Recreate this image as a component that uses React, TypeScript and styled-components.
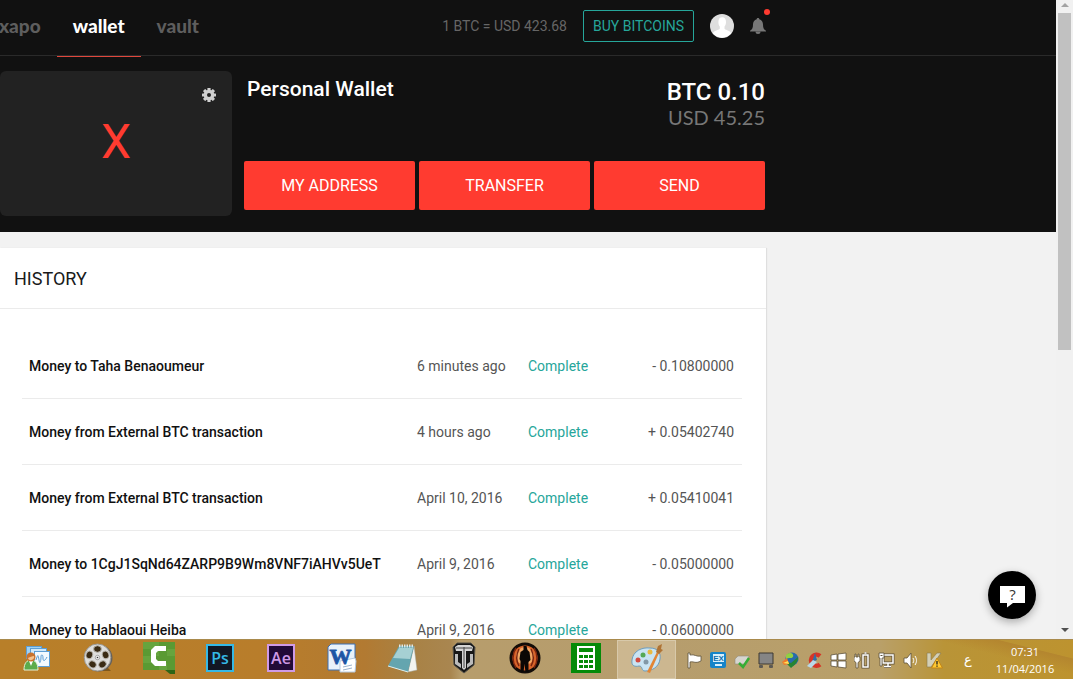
import React from 'react';
import styled, { createGlobalStyle } from 'styled-components';

const GlobalStyle = createGlobalStyle`
  * { box-sizing: border-box; }
  body { margin: 0; font-family: Roboto, 'Liberation Sans', sans-serif; background: #f2f2f2; }
  button { font-family: inherit; cursor: pointer; }
`;

const Desktop = styled.div`
  display: flex;
  flex-direction: column;
  height: 100vh;
  overflow: hidden;
`;

const Browser = styled.div`
  position: relative;
  display: flex;
  flex: 1;
  min-height: 0;
`;

const Page = styled.div`
  flex: 1;
  min-width: 0;
  overflow: hidden;
  background: #f2f2f2;
`;

const Dark = styled.div`
  background: #111;
`;

const TopBar = styled.header`
  border-bottom: 1px solid #2a2a2a;
`;

const TopBarInner = styled.div`
  display: flex;
  align-items: center;
  justify-content: space-between;
  width: 100%;
  max-width: 766px;
  height: 55px;
  padding-bottom: 3px;
`;

const Nav = styled.nav`
  display: flex;
  height: 57px;
  align-self: flex-start;
  margin-left: -17px;
`;

const NavLink = styled.a<{ $active?: boolean }>`
  padding: 14px 16px 0;
  font: 900 19px/24px Lato, sans-serif;
  color: ${(p) => (p.$active ? '#fff' : '#5e5e5e')};
  border-bottom: 1px solid ${(p) => (p.$active ? '#e0473c' : 'transparent')};
  text-decoration: none;
`;

const Account = styled.div`
  display: flex;
  align-items: center;
  gap: 16px;
`;

const Rate = styled.span`
  font-size: 14px;
  line-height: 20px;
  color: #666;
`;

const BuyButton = styled.button`
  width: 111px;
  height: 32px;
  padding: 0;
  border: 1px solid #26a69a;
  border-radius: 2px;
  background: transparent;
  color: #26a69a;
  font-size: 14px;
`;

const IconButton = styled.button`
  display: flex;
  padding: 0;
  border: 0;
  background: none;
`;

const BellButton = styled(IconButton)`
  position: relative;
`;

const Badge = styled.span`
  position: absolute;
  top: -9px;
  right: -4px;
  width: 6px;
  height: 6px;
  border-radius: 50%;
  background: #ff3b30;
`;

const Hero = styled.section`
  display: flex;
  gap: 12px;
  width: 100%;
  max-width: 765px;
  padding: 15px 0 16px;
`;

const WalletCard = styled.div`
  position: relative;
  display: flex;
  align-items: center;
  justify-content: center;
  width: 232px;
  height: 145px;
  padding-bottom: 4px;
  border-radius: 6px;
  background: #222;
`;

const WalletMark = styled.span`
  font-size: 48px;
  line-height: 56px;
  color: #ff3b30;
`;

const GearButton = styled(IconButton)`
  position: absolute;
  top: 17px;
  right: 16px;
`;

const Summary = styled.div`
  display: flex;
  flex: 1;
  flex-direction: column;
  justify-content: space-between;
  padding-bottom: 6px;
`;

const SummaryTop = styled.div`
  display: flex;
  justify-content: space-between;
  padding: 4px 0 0 3px;
`;

const WalletName = styled.h1`
  margin: 0;
  font-size: 21px;
  line-height: 28px;
  font-weight: 500;
  color: #fff;
`;

const Balance = styled.div`
  padding-top: 4px;
  text-align: right;
`;

const BalanceBtc = styled.div`
  font-size: 24px;
  line-height: 26px;
  font-weight: 500;
  color: #fff;
`;

const BalanceUsd = styled.div`
  font: 400 20px/24px Lato, sans-serif;
  color: #777;
`;

const Actions = styled.div`
  display: grid;
  grid-template-columns: repeat(3, 1fr);
  gap: 4px;
`;

const ActionButton = styled.button`
  height: 49px;
  border: 0;
  border-radius: 2px;
  background: #ff3b30;
  color: #fff;
  font-size: 16px;
`;

const HistoryCard = styled.section`
  width: 100%;
  max-width: 766px;
  margin-top: 16px;
  background: #fff;
  box-shadow: 1px 0 1px rgba(0, 0, 0, 0.08);
`;

const HistoryTitle = styled.h2`
  margin: 0;
  padding: 19px 14px 17px;
  border-bottom: 1px solid #ebebeb;
  font-size: 18px;
  line-height: 24px;
  font-weight: 400;
  color: #1a1a1a;
`;

const HistoryBody = styled.div`
  padding: 24px 24px 24px 22px;
`;

const Table = styled.table`
  width: 100%;
  table-layout: fixed;
  border-collapse: separate;
  border-spacing: 0;
  font-size: 14px;
  line-height: 20px;
`;

const Cell = styled.td<{ $tone?: 'name' | 'status' | 'amount' }>`
  height: 66px;
  padding: 1px 8px 0 7px;
  border-bottom: 1px solid #ebebeb;
  white-space: nowrap;
  font-weight: ${(p) => (p.$tone === 'name' ? 500 : 400)};
  text-align: ${(p) => (p.$tone === 'amount' ? 'right' : 'left')};
  color: ${(p) => (p.$tone === 'name' ? '#111' : p.$tone === 'status' ? '#26a69a' : '#555')};
`;

const Col = styled.col<{ $width?: number }>`
  width: ${(p) => (p.$width ? `${p.$width}px` : 'auto')};
`;

const ChatButton = styled.button`
  position: absolute;
  right: 37px;
  bottom: 20px;
  display: flex;
  align-items: center;
  justify-content: center;
  width: 48px;
  height: 48px;
  padding: 3px 0 0;
  border: 0;
  border-radius: 50%;
  background: #000;
  box-shadow: 0 3px 8px rgba(0, 0, 0, 0.3);
`;

const ScrollTrack = styled.div`
  display: flex;
  flex-direction: column;
  align-items: center;
  width: 17px;
  padding: 3px 0 7px;
  background: #f1f1f1;
`;

const ScrollThumb = styled.div`
  width: 13px;
  height: 337px;
  margin: 6px 0 auto;
  background: #c1c1c1;
`;

const ScrollArrow = styled.div<{ $up?: boolean }>`
  border: solid transparent;
  border-width: ${(p) => (p.$up ? '0 4px 4px' : '4px 4px 0')};
  ${(p) => (p.$up ? 'border-bottom-color: #a3a3a3' : 'border-top-color: #505050')};
`;

const Taskbar = styled.footer`
  display: flex;
  justify-content: space-between;
  height: 40px;
  padding: 0 14px 0 6px;
  border-top: 1px solid #a98a4c;
  background:
    linear-gradient(14deg, transparent 60%, #b4862f 78%, transparent 79%) right / 190px 100% no-repeat,
    linear-gradient(90deg, #b87f29 0%, #b87d2b 25%, #b27a32 34%, #a88143 38%, #a98650 42%, #b79d6c 43%, #b69d6d 62%, #b9a069 82%, #b99437 88%, #bd932f 100%);
`;

const Apps = styled.div`
  display: flex;
`;

const AppButton = styled.button<{ $active?: boolean }>`
  display: flex;
  align-items: center;
  justify-content: center;
  width: 59px;
  height: 39px;
  margin: 0 1px;
  padding: 0 0 3px;
  border: 1px solid ${(p) => (p.$active ? '#d8c9aa' : 'transparent')};
  background: ${(p) => (p.$active ? 'rgba(255, 245, 225, 0.3)' : 'none')};
`;

const Tray = styled.div`
  display: flex;
  align-items: center;
`;

const TrayItem = styled.button`
  display: flex;
  align-items: center;
  justify-content: center;
  width: 24px;
  height: 40px;
  padding: 2px 0 0 2px;
  border: 0;
  background: none;
`;

const Language = styled.button`
  width: 46px;
  padding: 0;
  border: 0;
  background: none;
  color: #fff;
  font: 13px/20px 'DejaVu Sans', sans-serif;
`;

const Clock = styled.div`
  width: 68px;
  font: 11px/17px 'Open Sans', sans-serif;
  text-align: center;
  color: #fff;
  white-space: nowrap;
`;

const Svg = ({ w, h = w, children }: { w: number; h?: number; children: React.ReactNode }) => (
  <svg width={w} height={h} viewBox={`0 0 ${w} ${h}`} aria-hidden="true">
    {children}
  </svg>
);

const Avatar = () => (
  <Svg w={24}>
    <circle cx="12" cy="12" r="12" fill="#dedede" />
    <path d="M8.400 8C8.400 4.600 9.900 3.200 12.300 3.200S16 4.800 16 8c0 2-.7 3.500-1.500 4.500v2c0 1.500 5 1.500 6.800 4.800A12 12 0 0 1 2.700 19.300C4.500 16 9.800 16 9.800 14.500v-2C9 11.500 8.400 10 8.400 8z" fill="#fff" />
  </Svg>
);

const Bell = () => (
  <Svg w={16}>
    <path d="M8 0c.8 0 1.300.5 1.300 1.300C11.800 2 13 4 13 6.500c0 3.500.8 5 3 6.300v.7H0v-.7c2.200-1.300 3-2.800 3-6.300C3 4 4.200 2 6.700 1.300 6.700.5 7.200 0 8 0z" fill="#777" />
    <path d="M5.500 13.500h5a2.500 2.500 0 0 1-5 0z" fill="#777" />
  </Svg>
);

const Gear = () => (
  <Svg w={14}>
    <g fill="#d0d0d0">
      {[0, 45, 90, 135].map((a) => (
        <rect key={a} x="5.400" y="0" width="3.200" height="14" rx=".5" transform={`rotate(${a} 7 7)`} />
      ))}
      <circle cx="7" cy="7" r="5.300" />
    </g>
    <circle cx="7" cy="7" r="2" fill="#222" />
  </Svg>
);

const Chat = () => (
  <Svg w={25} h={22}>
    <path d="M0 0h25v17H13l-6 4.500V17H0z" fill="#fff" />
    <text x="12.500" y="14" textAnchor="middle" fontFamily="Open Sans, sans-serif" fontSize="15" fill="#333">
      ?
    </text>
  </Svg>
);

const Presenter = () => (
  <Svg w={28}>
    <g stroke="#5d9ed4">
      <rect x="3.500" y="2.500" width="15" height="12" fill="#9fd2f5" />
      <rect x="7.500" y="4.500" width="16" height="14" fill="#cfe8fa" />
      <rect x="11.500" y="7.500" width="15" height="15" fill="#f3faff" />
      <path d="M13 16c2-6 2-6 3 0s2 0 2-3 2-3 2 1 2 3 4-1" fill="none" />
    </g>
    <path d="M1 26c0-7 3-10 7-10s7 3 7 10z" fill="#5cac4c" stroke="#e2f3d8" />
    <path d="M6 17l2 5 2-5z" fill="#fff" />
    <circle cx="8" cy="13" r="4.500" fill="#c9722c" />
    <path d="M5 14c2-1 4-2 6-2 1 4-5 6-6 2z" fill="#f5c28d" />
  </Svg>
);

const Reel = () => (
  <Svg w={30}>
    <path d="M8 28h20l-4-4z" fill="#805719" />
    <ellipse cx="15.500" cy="15" rx="14" ry="13.500" fill="#65615c" />
    <ellipse cx="14.500" cy="14.500" rx="13.300" ry="13.500" fill="#dededc" stroke="#9b9892" />
    {[0, 72, 144, 216, 288].map((a) => (
      <ellipse key={a} cx="14.500" cy="6" rx="3.900" ry="3.300" fill="#3a2b14" stroke="#b9b6ae" transform={`rotate(${a} 14.500 14.500)`} />
    ))}
    <circle cx="14.500" cy="14.500" r="2.200" fill="#f5f5f5" stroke="#888" strokeWidth=".7" />
    <circle cx="14.500" cy="14.500" r=".8" fill="#333" />
  </Svg>
);

const Camtasia = () => (
  <Svg w={32}>
    <path d="M0 0h32v32h-5l-5-4H0z" fill="#2e6516" />
    <path d="M0 0h32v28H0z" fill="#5a9a33" />
    <path d="M0 0h16v7H0zM8 7h8v7H8zM0 14h8v7H0zM24 7h8v7h-8zM16 21h8v7h-8z" fill="#66a43e" />
    <path d="M23 4H12L8 8v12l4 4h11v-5h-8l-2-2v-6l2-2h8z" fill="#fff" />
  </Svg>
);

const Adobe = ({ text, fill, line }: { text: string; fill: string; line: string }) => (
  <Svg w={30}>
    <rect x="2" y="2" width="26" height="26" fill={fill} stroke={line} strokeWidth="2" />
    <text x="15" y="21" textAnchor="middle" fontFamily="Open Sans, sans-serif" fontWeight="600" fontSize="16" fill={line}>
      {text}
    </text>
  </Svg>
);

const Word = () => (
  <Svg w={30}>
    <path d="M4 1h24v26H1V4z" fill="#e9f1fa" stroke="#3c70b5" />
    <path d="M13 18l15-3 1 3-1 11H13z" fill="#fff" stroke="#b6c9df" />
    <path d="M16 24l9-2M16 27l9-2" stroke="#9bb2cc" />
    <text x="13.500" y="21" textAnchor="middle" fontFamily="Liberation Serif, serif" fontWeight="700" fontSize="22" fill="#1c55a5" stroke="#1c55a5" strokeWidth=".8">
      W
    </text>
  </Svg>
);

const Notepad = () => (
  <Svg w={32} h={30}>
    <path d="M27 3l3 24-9 2z" fill="#f2f3ef" stroke="#a5aaa5" strokeWidth=".5" />
    <path d="M12 3h15l-6 26L1 23z" fill="#64a5af" />
    <path d="M12 5h14l-3 11-17-1z" fill="#a6d0d3" />
    <path d="M12 3h15" stroke="#dfe8e8" strokeWidth="3" strokeDasharray="1.500 1" />
    <path d="M1 23l20 6" stroke="#dff0f0" />
  </Svg>
);

const Tanks = () => (
  <Svg w={24} h={32}>
    <path d="M5 1h14l4 4-1 18-10 8L2 23 1 5z" fill="#171717" stroke="#565249" />
    <path d="M3 5l3-2h12l3 2-1 4h-6v17l-2 2-2-2V9H4z" fill="#d5d5d5" />
    <path d="M3 12h3v8l3 2v4l-6-4zM21 12h-3v8l-3 2v4l6-4z" fill="#bbb" />
    <path d="M12 5v21M4 6h16" stroke="#444" />
  </Svg>
);

const Game = () => (
  <Svg w={32}>
    <circle cx="16" cy="16" r="14" fill="#d9642a" stroke="#130c08" strokeWidth="3" />
    <circle cx="16" cy="14" r="9" fill="#efa665" />
    <path d="M7 6c-4 6-4 14 0 20M10 7c-3 6-3 12 0 17M25 6c4 6 4 14 0 20M22 7c3 6 3 12 0 17" fill="none" stroke="#7a2510" strokeWidth="1.500" />
    <path d="M14.500 4h3l1 4 2 2 1 8-2 2v10h-3l-1-8-1 8h-3V19l-1-2 1-7 3-2z" fill="#0b0705" />
  </Svg>
);

const Calculator = () => (
  <Svg w={30}>
    <path d="M0 0h30v30H0z" fill="#068a08" />
    <path d="M6 3h18v24H6z" fill="#fff" />
    <path d="M8 5h14v4H8zM8 12h4v3H8zM13 12h4v3h-4zM18 12h4v3h-4zM8 17h4v3H8zM13 17h4v3h-4zM18 17h4v3h-4zM8 22h4v3H8zM13 22h4v3h-4zM18 22h4v3h-4z" fill="#068a08" />
  </Svg>
);

const Paint = () => (
  <Svg w={34} h={30}>
    <path d="M2 17C3 8 12 4 20 5c8 0 11 5 10 11-1 8-8 12-15 12-4 0-2-5-6-5-4 1-8 0-7-6z" fill="#c9e4f3" stroke="#6f9cba" />
    <circle cx="8" cy="17" r="2.500" fill="#d34b40" />
    <circle cx="13" cy="12" r="2.500" fill="#55a955" />
    <circle cx="20" cy="9" r="2.500" fill="#e9ba42" />
    <circle cx="16" cy="19" r="2.500" fill="#8298a6" />
    <path d="M17 29l10-20 2 1-9 20z" fill="#e18535" />
    <path d="M26 9l2-6 4-2-1 5 2 1-4 4z" fill="#af7334" />
  </Svg>
);

const glyph = { fill: '#fff', stroke: '#5c503b', strokeWidth: 0.8 };

const trayIcons: { name: string; art: React.ReactNode }[] = [
  { name: 'Action center', art: <path d="M2 1v15h2v-6c4-1 5 2 11-1V4c-5 1-6-2-11-1V1z" {...glyph} /> },
  {
    name: 'Graphics',
    art: (
      <>
        <rect x="0" y="0" width="16" height="16" rx="2" fill="#1684c8" />
        <path d="M3 2h11v8H3zM5 12h7v2H5z" fill="#d8effb" />
        <text x="8.500" y="9" textAnchor="middle" fontFamily="Liberation Sans, sans-serif" fontWeight="700" fontSize="8" fill="#1270ad">
          EX
        </text>
      </>
    ),
  },
  {
    name: 'Safely remove hardware',
    art: (
      <>
        <path d="M1 7l3-3h11l-2 8H1z" fill="#d6d5cf" stroke="#918b7d" strokeWidth=".6" />
        <path d="M5 11l4 4 6-9" fill="none" stroke="#35ad35" strokeWidth="2.500" />
      </>
    ),
  },
  {
    name: 'Network adapter',
    art: (
      <>
        <path d="M1 1h14v11H1z" fill="#858585" stroke="#3c3933" />
        <rect x="1" y="13" width="4" height="3" rx="1" fill="#5c5953" />
        <rect x="11" y="13" width="4" height="3" rx="1" fill="#5c5953" />
      </>
    ),
  },
  {
    name: 'Download manager',
    art: (
      <>
        <circle cx="10" cy="7" r="6.500" fill="#286bad" />
        <path d="M4 3c5-4 8-1 7 2-2 2-4 0-7 2z" fill="#91cf42" />
        <path d="M5 10l4 1 7-6c0 5-3 8-7 11l-4-4z" fill="#258433" />
        <path d="M0 10l5-4 2 6-5 1z" fill="#ef7a29" />
        <path d="M1 11l5-2 1 3z" fill="#ffe057" />
      </>
    ),
  },
  {
    name: 'Cleaner',
    art: (
      <>
        <path d="M14 4A5.500 5.500 0 1 0 14 12.500" fill="none" stroke="#d63527" strokeWidth="4.500" />
        <path d="M9 1l2 7-5 2z" fill="#336ea5" />
        <path d="M7 8l4 2-6 6-4-2z" fill="#b9d8e8" />
      </>
    ),
  },
  {
    name: 'Windows',
    art: <path d="M1 3l6-1v6H1zM8 2l8-1v7H8zM1 9h6v6l-6-1zM8 9h8v7l-8-1z" {...glyph} />,
  },
  {
    name: 'Battery',
    art: (
      <>
        <path d="M9 3h5v12H9zM10.500 1h2" fill="none" stroke="#5c503b" strokeWidth="3" />
        <path d="M9 3h5v12H9zM10.500 1h2" fill="none" stroke="#fff" strokeWidth="1.500" />
        <path d="M1 2h1v3h2V2h1v3h1v4l-2 1.500V16H2v-5.500L0 9V5h1z" {...glyph} />
      </>
    ),
  },
  {
    name: 'Network',
    art: (
      <>
        <path d="M5 3h10v8H5zM10 11v3M6 14.500h7" fill="none" stroke="#5c503b" strokeWidth="3" />
        <path d="M5 3h10v8H5zM10 11v3M6 14.500h7" fill="none" stroke="#fff" strokeWidth="1.500" />
        <path d="M1 1h5v5H4v8H2V6H1z" {...glyph} />
        <path d="M2.500 3h2v1h-2z" fill="#5c503b" />
      </>
    ),
  },
  {
    name: 'Volume',
    art: (
      <>
        <path d="M2 6h3l4-5v15l-4-5H2z" {...glyph} />
        <path d="M11 6c1 2 1 3 0 5M13 4c2 3 2 6 0 9" fill="none" stroke="#fff" />
      </>
    ),
  },
  {
    name: 'Antivirus',
    art: (
      <>
        <path d="M1 1h4v7l6-7h4L5 15H1z" fill="#d3cfb6" stroke="#88784f" strokeWidth=".6" />
        <path d="M11 6l5.500 10H5.500z" fill="#ffc933" stroke="#c38516" />
        <path d="M11 9v3.500M11 13.500v1.300" stroke="#222" strokeWidth="1.300" />
      </>
    ),
  },
];

const apps: { name: string; icon: React.ReactNode; active?: boolean }[] = [
  { name: 'Remote presenter', icon: <Presenter /> },
  { name: 'Media player', icon: <Reel /> },
  { name: 'Camtasia', icon: <Camtasia /> },
  { name: 'Photoshop', icon: <Adobe text="Ps" fill="#121724" line="#35b8e5" /> },
  { name: 'After Effects', icon: <Adobe text="Ae" fill="#220a37" line="#cf9ae6" /> },
  { name: 'Word', icon: <Word /> },
  { name: 'Notepad', icon: <Notepad /> },
  { name: 'World of Tanks', icon: <Tanks /> },
  { name: 'Game', icon: <Game /> },
  { name: 'Calculator', icon: <Calculator /> },
  { name: 'Paint', icon: <Paint />, active: true },
];

const history = [
  ['Money to Taha Benaoumeur', '6 minutes ago', '- 0.10800000'],
  ['Money from External BTC transaction', '4 hours ago', '+ 0.05402740'],
  ['Money from External BTC transaction', 'April 10, 2016', '+ 0.05410041'],
  ['Money to 1CgJ1SqNd64ZARP9B9Wm8VNF7iAHVv5UeT', 'April 9, 2016', '- 0.05000000'],
  ['Money to Hablaoui Heiba', 'April 9, 2016', '- 0.06000000'],
];

export default function App() {
  return (
    <Desktop>
      <GlobalStyle />
      <Browser>
        <Page>
          <Dark>
            <TopBar>
              <TopBarInner>
                <Nav>
                  <NavLink href="#xapo">xapo</NavLink>
                  <NavLink href="#wallet" $active>wallet</NavLink>
                  <NavLink href="#vault">vault</NavLink>
                </Nav>
                <Account>
                  <Rate>1 BTC = USD 423.68</Rate>
                  <BuyButton>BUY BITCOINS</BuyButton>
                  <IconButton aria-label="Profile"><Avatar /></IconButton>
                  <BellButton aria-label="Notifications"><Bell /><Badge /></BellButton>
                </Account>
              </TopBarInner>
            </TopBar>
            <Hero>
              <WalletCard>
                <WalletMark>X</WalletMark>
                <GearButton aria-label="Wallet settings"><Gear /></GearButton>
              </WalletCard>
              <Summary>
                <SummaryTop>
                  <WalletName>Personal Wallet</WalletName>
                  <Balance>
                    <BalanceBtc>BTC 0.10</BalanceBtc>
                    <BalanceUsd>USD 45.25</BalanceUsd>
                  </Balance>
                </SummaryTop>
                <Actions>
                  <ActionButton>MY ADDRESS</ActionButton>
                  <ActionButton>TRANSFER</ActionButton>
                  <ActionButton>SEND</ActionButton>
                </Actions>
              </Summary>
            </Hero>
          </Dark>
          <HistoryCard>
            <HistoryTitle>HISTORY</HistoryTitle>
            <HistoryBody>
              <Table>
                <colgroup>
                  <Col />
                  <Col $width={111} />
                  <Col $width={95} />
                  <Col $width={126} />
                </colgroup>
                <tbody>
                  {history.map(([name, date, amount]) => (
                    <tr key={amount}>
                      <Cell $tone="name">{name}</Cell>
                      <Cell>{date}</Cell>
                      <Cell $tone="status">Complete</Cell>
                      <Cell $tone="amount">{amount}</Cell>
                    </tr>
                  ))}
                </tbody>
              </Table>
            </HistoryBody>
          </HistoryCard>
        </Page>
        <ChatButton aria-label="Help"><Chat /></ChatButton>
        <ScrollTrack>
          <ScrollArrow $up />
          <ScrollThumb />
          <ScrollArrow />
        </ScrollTrack>
      </Browser>
      <Taskbar>
        <Apps>
          {apps.map((a) => (
            <AppButton key={a.name} aria-label={a.name} $active={a.active}>{a.icon}</AppButton>
          ))}
        </Apps>
        <Tray>
          {trayIcons.map((t) => (
            <TrayItem key={t.name} aria-label={t.name}>
              <Svg w={17}>{t.art}</Svg>
            </TrayItem>
          ))}
          <Language>ع</Language>
          <Clock>07:31<br />11/04/2016</Clock>
        </Tray>
      </Taskbar>
    </Desktop>
  );
}
